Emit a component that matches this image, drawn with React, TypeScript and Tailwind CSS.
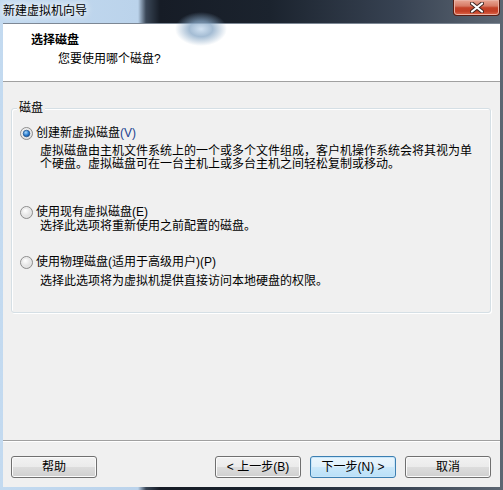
import React from "react";

const font = "font-['Liberation_Sans','Noto_Sans_CJK_SC',sans-serif]";

const Radio = ({ checked }: { checked?: boolean }) => (
  <svg width="13" height="13" viewBox="0 0 13 13" className="shrink-0">
    <defs>
      <radialGradient id="rOuter" cx="40%" cy="35%" r="70%">
        <stop offset="0%" stopColor="#ffffff" />
        <stop offset="100%" stopColor="#d4d4d4" />
      </radialGradient>
      <radialGradient id="rDot" cx="40%" cy="35%" r="70%">
        <stop offset="0%" stopColor="#a8d8fa" />
        <stop offset="60%" stopColor="#2a7dd1" />
        <stop offset="100%" stopColor="#154e92" />
      </radialGradient>
    </defs>
    <circle cx="6.5" cy="6.5" r="6" fill="url(#rOuter)" stroke="#8d8d8d" />
    <circle cx="6.5" cy="6.5" r="4.5" fill="none" stroke="#e9e9e9" strokeWidth="1" />
    {checked && <circle cx="6.5" cy="6.5" r="3.3" fill="url(#rDot)" stroke="#1d4f86" strokeWidth="0.7" />}
  </svg>
);

const Button = ({ label, isDefault }: { label: string; isDefault?: boolean }) => (
  <div
    className={
      isDefault
        ? "w-[86px] h-[22px] rounded-[3px] border border-[#3c7fb1] bg-[linear-gradient(180deg,#eaf6fd_0%,#dff0fb_50%,#cbe8fa_50%,#b9e0f8_100%)] shadow-[inset_0_0_0_1px_#c8e6fa] flex items-center justify-center text-[12px] text-black"
        : "w-[86px] h-[22px] rounded-[3px] border border-[#707070] bg-[linear-gradient(180deg,#f2f2f2_0%,#ebebeb_50%,#dddddd_50%,#cfcfcf_100%)] shadow-[inset_0_0_0_1px_#fbfbfb] flex items-center justify-center text-[12px] text-black"
    }
  >
    {label}
  </div>
);

export default function App() {
  return (
    <div
      className={`${font} relative w-[503px] h-[490px] flex flex-col overflow-hidden bg-[linear-gradient(90deg,#c3daf0_0px,#bbd3eb_138px,#3a4757_146px,#161c26_160px,#1b232e_270px,#384353_400px,#5d6773_503px)]`}
    >
      {/* title bar */}
      <div className="relative h-[23px] shrink-0 flex justify-between">
        <div className="absolute left-[175px] top-[12px] w-[52px] h-[34px] rounded-full bg-[radial-gradient(closest-side,#c2d8ee_0%,#86a6c5_45%,transparent_100%)] opacity-75" />
        <div className="relative pl-[3px] pt-[4px] text-[12px] leading-[14px] text-black [text-shadow:0_0_6px_#fff,0_0_10px_#fff]">
          新建虚拟机向导
        </div>
        <div className="relative mr-[3px] w-[47px] h-[16px] rounded-b-[4px] border border-t-0 border-[#5a1d12] bg-[linear-gradient(180deg,#e9a795_0%,#d77a65_40%,#c44228_52%,#c23e25_75%,#e0694b_100%)] shadow-[inset_0_0_0_1px_#eab1a3] flex items-center justify-center">
          <svg width="14" height="11" viewBox="0 0 14 11">
            <path d="M2 1.5 L12 9.5 M12 1.5 L2 9.5" stroke="#3d2420" strokeWidth="4" strokeLinecap="round" />
            <path d="M2 1.5 L12 9.5 M12 1.5 L2 9.5" stroke="#ffffff" strokeWidth="2.2" strokeLinecap="round" />
          </svg>
        </div>
      </div>

      {/* client area */}
      <div className="mx-[3px] h-[464px] shrink-0 flex flex-col bg-[#f0f0f0] text-[12px] text-black">
        {/* header */}
        <div className="h-[59px] shrink-0 bg-white border-t border-b border-t-[#7c8794] border-b-[#a0a0a0] pt-[10px]">
          <div className="pl-[28px] leading-[12px] font-bold">选择磁盘</div>
          <div className="pl-[55px] mt-[7px] leading-[12px]">您要使用哪个磁盘?</div>
        </div>

        {/* group box */}
        <div className="relative mt-[26px] ml-[8px] mr-[9px] h-[205px] rounded-[3px] border border-[#d5dfe5] shadow-[inset_1px_1px_0_#fff,1px_1px_0_#fff] pl-[8px] pt-[18px]">
          <span className="absolute left-[5px] top-[-7px] px-[2px] bg-[#f0f0f0] leading-[12px]">磁盘</span>

          <div className="flex items-center gap-[3px] h-[13px] leading-[13px]">
            <Radio checked />
            <span>
              创建新虚拟磁盘<span className="text-[#1b3f8f]">(V)</span>
            </span>
          </div>
          <div className="pl-[20px] mt-[5px] leading-[13px] whitespace-nowrap">
            <div>虚拟磁盘由主机文件系统上的一个或多个文件组成，客户机操作系统会将其视为单</div>
            <div>个硬盘。虚拟磁盘可在一台主机上或多台主机之间轻松复制或移动。</div>
          </div>

          <div className="mt-[35px] flex items-center gap-[3px] h-[13px] leading-[13px]">
            <Radio />
            <span>使用现有虚拟磁盘(E)</span>
          </div>
          <div className="pl-[20px] mt-[1px] leading-[12px]">选择此选项将重新使用之前配置的磁盘。</div>

          <div className="mt-[24px] flex items-center gap-[3px] h-[13px] leading-[13px]">
            <Radio />
            <span>使用物理磁盘(适用于高级用户)(P)</span>
          </div>
          <div className="pl-[20px] mt-[6px] leading-[12px]">选择此选项将为虚拟机提供直接访问本地硬盘的权限。</div>
        </div>

        <div className="flex-1" />

        {/* footer */}
        <div className="h-[47px] shrink-0 border-t border-[#a0a0a0] shadow-[inset_0_1px_0_#fff] pt-[15px] pl-[8px] pr-[9px] flex items-start">
          <Button label="帮助" />
          <div className="flex-1" />
          <div className="flex gap-[9px]">
            <Button label="< 上一步(B)" />
            <Button label="下一步(N) >" isDefault />
            <Button label="取消" />
          </div>
        </div>
      </div>
    </div>
  );
}
